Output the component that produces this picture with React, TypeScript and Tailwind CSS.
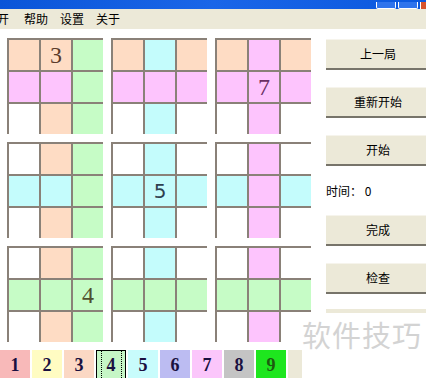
import React from 'react';

const C: Record<string, string> = {
  p: 'bg-[#fedcc4]',
  m: 'bg-[#fdc4fd]',
  g: 'bg-[#c6fcc6]',
  c: 'bg-[#c4fcfc]',
  w: 'bg-white',
};

type Block = { cells: string; num?: { at: number; text: string; cls: string } };

const blocks: Block[] = [
  { cells: 'ppgmmgwpg', num: { at: 1, text: '3', cls: 'text-[#5b3b2b] font-["Liberation_Serif",serif]' } },
  { cells: 'pcpmmmwcw' },
  { cells: 'pmpmmmwmw', num: { at: 4, text: '7', cls: 'text-[#6b2f63] font-["Liberation_Serif",serif]' } },
  { cells: 'wpgccgwpg' },
  { cells: 'wcwcccwcw', num: { at: 4, text: '5', cls: 'text-[#2f3f4f] font-["DejaVu_Sans",sans-serif] text-[20px]' } },
  { cells: 'wmwcmcwmw' },
  { cells: 'wpggggwpg', num: { at: 5, text: '4', cls: 'text-[#4f4f2f] font-["Liberation_Serif",serif]' } },
  { cells: 'wcwgggwcw' },
  { cells: 'wmwgggwmw' },
];

const picks = [
  { n: '1', bg: 'bg-[#f8b9b9]' },
  { n: '2', bg: 'bg-[#fffcc2]' },
  { n: '3', bg: 'bg-[#fbd8c4]' },
  { n: '4', bg: 'bg-[#c6f6c6]', sel: true },
  { n: '5', bg: 'bg-[#c8fcfc]' },
  { n: '6', bg: 'bg-[#bcbcf2]' },
  { n: '7', bg: 'bg-[#fbc6fb]' },
  { n: '8', bg: 'bg-[#c4c4c4]' },
  { n: '9', bg: 'bg-[#1ee61e]', dark: true },
];

const Btn: React.FC<{ label: string }> = ({ label }) => (
  <div className="h-[31px] w-[104px] shrink-0 bg-[#ece9d8] border-t border-t-[#f6f4ec] border-b-2 border-b-[#77746a] flex items-center justify-center text-[12px] text-black">
    {label}
  </div>
);

const App: React.FC = () => {
  return (
    <div className="relative w-[426px] h-[378px] overflow-hidden bg-white font-['Noto_Sans_CJK_SC','Noto_Sans',sans-serif]">
      {/* title bar, mostly cut off */}
      <div className="h-[9px] bg-gradient-to-r from-[#0a55d8] via-[#1a66e8] to-[#0a58de] flex justify-end items-end gap-[2px]">
        <div className="w-[20px] h-[7px] bg-[#2f74ec] border border-white border-t-0 rounded-b-[2px]" />
        <div className="w-[20px] h-[7px] bg-[#2f74ec] border border-white border-t-0 rounded-b-[2px]" />
        <div className="w-[6px] h-[7px] bg-[#d8542c] border-l border-white" />
      </div>

      {/* menu bar */}
      <div className="h-[20px] bg-[#ece9d8] flex items-center text-[12px] text-black leading-none">
        <span className="-ml-[3px] mr-[15px]">开</span>
        <span className="mr-[12px]">帮助</span>
        <span className="mr-[12px]">设置</span>
        <span>关于</span>
      </div>

      <div className="flex">
        {/* board */}
        <div className="shrink-0 pl-[7px] pt-[9px] grid grid-cols-[96px_96px_96px] gap-[8px]">
          {blocks.map((b, bi) => (
            <div key={bi} className="grid grid-cols-[32px_32px_32px]">
              {b.cells.split('').map((k, ci) => (
                <div
                  key={ci}
                  className={`h-[32px] border-t-2 border-l-2 border-[#8a8178] flex items-center justify-center text-[24px] leading-none ${C[k]}`}
                >
                  {b.num && b.num.at === ci ? <span className={b.num.cls}>{b.num.text}</span> : null}
                </div>
              ))}
            </div>
          ))}
        </div>

        {/* side panel */}
        <div className="shrink-0 ml-[15px] pt-[10px] flex flex-col">
          <Btn label="上一局" />
          <div className="h-[17px]" />
          <Btn label="重新开始" />
          <div className="h-[17px]" />
          <Btn label="开始" />
          <div className="h-[49px] flex items-center text-[12px] text-black">时间： 0</div>
          <Btn label="完成" />
          <div className="h-[17px]" />
          <Btn label="检查" />
          <div className="h-[15px]" />
          <div className="h-[4px] w-[104px] bg-[#ece9d8]" />
        </div>
      </div>

      {/* colour picker row */}
      <div className="mt-[8px] flex gap-[2px] items-start">
        {picks.map((p) => (
          <div
            key={p.n}
            className={`w-[30px] h-[30px] shrink-0 flex items-center justify-center ${p.bg} ${
              p.sel ? 'border border-black' : ''
            }`}
          >
            <span
              className={`font-['Liberation_Serif',serif] font-bold text-[18px] leading-none ${
                p.dark ? 'text-[#1e5a10]' : 'text-[#1a1040]'
              } ${p.sel ? 'outline outline-1 outline-dotted outline-black outline-offset-[5px]' : ''}`}
            >
              {p.n}
            </span>
          </div>
        ))}
        <div className="w-[14px] h-[30px] shrink-0 bg-[#ece9d8]" />
      </div>

      {/* watermark */}
      <div className="absolute left-[302px] top-[320px] whitespace-nowrap text-[29px] text-[#d3d3d3] tracking-[1px] leading-none">
        软件技巧
      </div>
    </div>
  );
};

export default App;
